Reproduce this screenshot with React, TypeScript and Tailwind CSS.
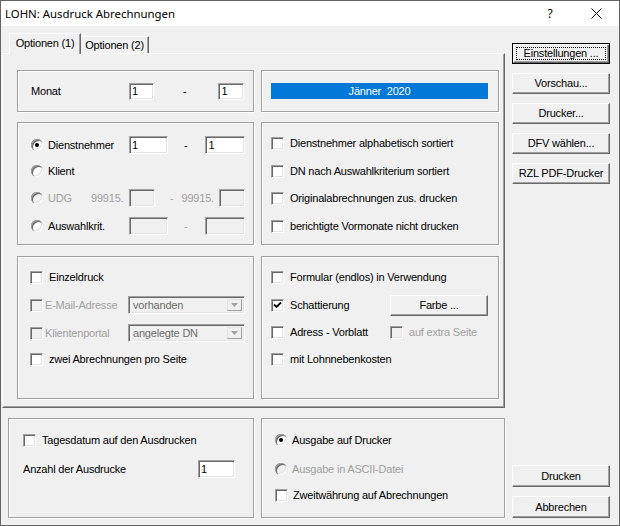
import React from 'react'

type Kid = { children?: React.ReactNode; className?: string }

function Check({ checked = false, disabled = false }: { checked?: boolean; disabled?: boolean }) {
  return (
    <span
      className={`flex items-center justify-center w-[13px] h-[13px] shrink-0 border border-t-[#a0a0a0] border-l-[#a0a0a0] border-r-white border-b-white shadow-[inset_1px_1px_0_#696969,inset_-1px_-1px_0_#e3e3e3] ${
        disabled ? 'bg-[#f0f0f0]' : 'bg-white'
      }`}
    >
      {checked && (
        <svg width="9" height="9" viewBox="0 0 9 9">
          <path d="M1 3.5 L3.5 6 L8 1.5" stroke="#000" strokeWidth="1.8" fill="none" />
        </svg>
      )}
    </span>
  )
}

function Radio({ on = false, disabled = false }: { on?: boolean; disabled?: boolean }) {
  return (
    <span
      className={`flex items-center justify-center w-[12px] h-[12px] rounded-full shrink-0 shadow-[inset_1px_1px_0_#a0a0a0,inset_2px_2px_0_#696969,inset_-1px_-1px_0_#fff,inset_-2px_-2px_0_#e3e3e3] ${
        disabled ? 'bg-[#f0f0f0]' : 'bg-white'
      }`}
    >
      {on && <span className="w-[4px] h-[4px] rounded-full bg-black" />}
    </span>
  )
}

function Field({ value = '', disabled = false, className = '' }: { value?: string; disabled?: boolean; className?: string }) {
  return (
    <div
      className={`flex items-center pl-[2px] shrink-0 border border-t-[#a0a0a0] border-l-[#a0a0a0] border-r-white border-b-white shadow-[inset_1px_1px_0_#696969,inset_-1px_-1px_0_#e3e3e3] ${
        disabled ? 'bg-[#f0f0f0]' : 'bg-white'
      } ${className}`}
    >
      {value}
    </div>
  )
}

function Combo({ value }: { value: string }) {
  return (
    <div className="flex w-[117px] h-[18px] shrink-0 border border-t-[#a0a0a0] border-l-[#a0a0a0] border-r-white border-b-white shadow-[inset_1px_1px_0_#696969,inset_-1px_-1px_0_#e3e3e3] bg-[#f0f0f0] p-[2px]">
      <span className="flex-1 pl-[2px] text-[#6d6d6d] leading-[13px]">{value}</span>
      <span className="flex items-center justify-center w-[15px] h-full border border-t-[#e3e3e3] border-l-[#e3e3e3] border-r-[#a0a0a0] border-b-[#a0a0a0]">
        <svg width="7" height="4" viewBox="0 0 7 4">
          <path d="M0 0 H7 L3.5 4 Z" fill="#a0a0a0" />
        </svg>
      </span>
    </div>
  )
}

function Btn({ children, className = '' }: Kid) {
  return (
    <div
      className={`flex items-center justify-center bg-[#f0f0f0] border border-t-white border-l-white border-r-[#696969] border-b-[#696969] shadow-[inset_-1px_-1px_0_#a0a0a0] ${className}`}
    >
      {children}
    </div>
  )
}

function Group({ children, className = '' }: Kid) {
  return (
    <div className={`border border-[#a0a0a0] shadow-[inset_1px_1px_0_#fff,1px_1px_0_#fff] ${className}`}>{children}</div>
  )
}

export default function App() {
  return (
    <div className="w-[620px] h-[526px] border border-[#646464] bg-[#f0f0f0] flex flex-col overflow-hidden text-[11px] leading-[13px] tracking-[-0.2px] text-black font-['Liberation_Sans',Arial,sans-serif]">
      {/* title bar */}
      <div className="h-[25px] bg-white flex items-center pl-[4px] shrink-0">
        <span className="text-[11.4px] tracking-normal font-['Noto_Sans',sans-serif]">LOHN: Ausdruck Abrechnungen</span>
        <div className="ml-auto flex h-full">
          <div className="w-[46px] flex items-center justify-center text-[12px] font-['Noto_Sans',sans-serif] tracking-normal">?</div>
          <div className="w-[46px] flex items-center justify-center">
            <svg width="11" height="11" viewBox="0 0 11 11">
              <path d="M0.5 0.5 L10.5 10.5 M10.5 0.5 L0.5 10.5" stroke="#000" strokeWidth="1" />
            </svg>
          </div>
        </div>
      </div>

      <div className="flex-1 flex">
        {/* left column */}
        <div className="ml-[1px] w-[503px] flex flex-col pt-[7px]">
          <div className="flex items-end h-[20px]">
            <div className="relative z-10 ml-[7px] mb-[-1px] w-[72px] h-[21px] bg-[#f0f0f0] border-t border-l border-r border-t-white border-l-white border-r-[#696969] shadow-[inset_-1px_0_0_#a0a0a0] flex items-start justify-center pt-[3px]">
              Optionen (1)
            </div>
            <div className="w-[68px] h-[17px] border-t border-r border-t-white border-r-[#696969] shadow-[inset_-1px_0_0_#a0a0a0] flex items-start justify-center pt-[2px]">
              Optionen (2)
            </div>
          </div>

          <div className="h-[355px] border border-t-white border-l-white border-r-[#696969] border-b-[#696969] shadow-[inset_-1px_-1px_0_#a0a0a0] pt-[16px] pl-[14px] flex flex-col">
            {/* row 1 */}
            <div className="flex gap-[7px]">
              <Group className="w-[237px] h-[42px] flex items-center pl-[13px]">
                <span className="w-[98px]">Monat</span>
                <Field value="1" className="w-[25px] h-[17px]" />
                <span className="ml-[29px]">-</span>
                <Field value="1" className="ml-[32px] w-[26px] h-[17px]" />
              </Group>
              <Group className="w-[238px] h-[42px] flex items-center pl-[9px]">
                <div className="w-[217px] h-[16px] bg-[#0078d7] text-white flex items-center justify-center whitespace-pre">
                  Jänner  2020
                </div>
              </Group>
            </div>

            {/* row 2 */}
            <div className="flex gap-[7px] mt-[10px]">
              <Group className="w-[237px] h-[123px] flex flex-col pl-[13px]">
                <div className="flex items-center h-[18px] mt-[13px]">
                  <div className="w-[98px] flex items-center gap-[5px]">
                    <Radio on />
                    <span>Dienstnehmer</span>
                  </div>
                  <Field value="1" className="w-[39px] h-[18px]" />
                  <span className="ml-[16px]">-</span>
                  <Field value="1" className="ml-[18px] w-[40px] h-[18px]" />
                </div>
                <div className="flex items-center h-[18px] mt-[8px] gap-[5px]">
                  <Radio />
                  <span>Klient</span>
                </div>
                <div className="flex items-center h-[18px] mt-[9px] text-[#a0a0a0]">
                  <div className="w-[60px] flex items-center gap-[5px]">
                    <Radio disabled />
                    <span>UDG</span>
                  </div>
                  <span className="w-[38px]">99915.</span>
                  <Field disabled className="w-[26px] h-[18px]" />
                  <span className="ml-[15px]">-</span>
                  <span className="ml-[8px] w-[38px]">99915.</span>
                  <Field disabled className="w-[26px] h-[18px]" />
                </div>
                <div className="flex items-center h-[18px] mt-[10px]">
                  <div className="w-[98px] flex items-center gap-[5px]">
                    <Radio />
                    <span>Auswahlkrit.</span>
                  </div>
                  <Field disabled className="w-[39px] h-[18px]" />
                  <span className="ml-[16px] text-[#a0a0a0]">-</span>
                  <Field disabled className="ml-[18px] w-[40px] h-[18px]" />
                </div>
              </Group>
              <Group className="w-[238px] h-[123px] flex flex-col pl-[9px]">
                <div className="flex items-center gap-[6px] h-[18px] mt-[11px]">
                  <Check />
                  <span>Dienstnehmer alphabetisch sortiert</span>
                </div>
                <div className="flex items-center gap-[6px] h-[18px] mt-[10px]">
                  <Check />
                  <span>DN nach Auswahlkriterium sortiert</span>
                </div>
                <div className="flex items-center gap-[6px] h-[18px] mt-[9px]">
                  <Check />
                  <span>Originalabrechnungen zus. drucken</span>
                </div>
                <div className="flex items-center gap-[6px] h-[18px] mt-[10px]">
                  <Check />
                  <span>berichtigte Vormonate nicht drucken</span>
                </div>
              </Group>
            </div>

            {/* row 3 */}
            <div className="flex gap-[7px] mt-[11px]">
              <Group className="w-[237px] h-[143px] flex flex-col pl-[12px]">
                <div className="flex items-center gap-[6px] h-[18px] mt-[11px]">
                  <Check />
                  <span>Einzeldruck</span>
                </div>
                <div className="flex items-center h-[18px] mt-[10px]">
                  <div className="w-[98px] flex items-center gap-[2px] text-[#a0a0a0]">
                    <Check disabled />
                    <span>E-Mail-Adresse</span>
                  </div>
                  <Combo value="vorhanden" />
                </div>
                <div className="flex items-center h-[18px] mt-[10px]">
                  <div className="w-[98px] flex items-center gap-[2px] text-[#a0a0a0]">
                    <Check disabled />
                    <span>Klientenportal</span>
                  </div>
                  <Combo value="angelegte DN" />
                </div>
                <div className="flex items-center gap-[6px] h-[18px] mt-[8px]">
                  <Check />
                  <span>zwei Abrechnungen pro Seite</span>
                </div>
              </Group>
              <Group className="w-[238px] h-[143px] flex flex-col pl-[9px]">
                <div className="flex items-center gap-[6px] h-[18px] mt-[11px]">
                  <Check />
                  <span>Formular (endlos) in Verwendung</span>
                </div>
                <div className="flex items-center h-[18px] mt-[10px]">
                  <div className="w-[119px] flex items-center gap-[6px]">
                    <Check checked />
                    <span>Schattierung</span>
                  </div>
                  <Btn className="w-[98px] h-[21px]">Farbe ...</Btn>
                </div>
                <div className="flex items-center h-[18px] mt-[9px]">
                  <div className="w-[119px] flex items-center gap-[6px]">
                    <Check />
                    <span>Adress - Vorblatt</span>
                  </div>
                  <div className="flex items-center gap-[6px] text-[#a0a0a0]">
                    <Check disabled />
                    <span>auf extra Seite</span>
                  </div>
                </div>
                <div className="flex items-center gap-[6px] h-[18px] mt-[9px]">
                  <Check />
                  <span>mit Lohnnebenkosten</span>
                </div>
              </Group>
            </div>
          </div>

          {/* bottom groups */}
          <div className="flex gap-[7px] mt-[10px] ml-[6px]">
            <Group className="w-[246px] h-[100px] flex flex-col pl-[14px]">
              <div className="flex items-center gap-[6px] h-[18px] mt-[12px]">
                <Check />
                <span>Tagesdatum auf den Ausdrucken</span>
              </div>
              <div className="flex items-center h-[18px] mt-[11px]">
                <span className="w-[175px]">Anzahl der Ausdrucke</span>
                <Field value="1" className="w-[37px] h-[18px]" />
              </div>
            </Group>
            <Group className="w-[244px] h-[100px] flex flex-col pl-[13px]">
              <div className="flex items-center gap-[5px] h-[18px] mt-[12px]">
                <Radio on />
                <span>Ausgabe auf Drucker</span>
              </div>
              <div className="flex items-center gap-[5px] h-[18px] mt-[11px] text-[#a0a0a0]">
                <Radio disabled />
                <span>Ausgabe in ASCII-Datei</span>
              </div>
              <div className="flex items-center gap-[5px] h-[18px] mt-[8px]">
                <Check />
                <span>Zweitwährung auf Abrechnungen</span>
              </div>
            </Group>
          </div>
        </div>

        {/* right column */}
        <div className="ml-[7px] w-[98px] flex flex-col pt-[17px] pb-[7px]">
          <div className="h-[21px] border border-black">
            <Btn className="h-full p-[2px]">
              <span className="flex-1 h-full border border-dotted border-black flex items-center justify-center">
                Einstellungen ...
              </span>
            </Btn>
          </div>
          <Btn className="h-[21px] mt-[9px]">Vorschau...</Btn>
          <Btn className="h-[21px] mt-[9px]">Drucker...</Btn>
          <Btn className="h-[21px] mt-[9px]">DFV wählen...</Btn>
          <Btn className="h-[21px] mt-[9px]">RZL PDF-Drucker</Btn>
          <Btn className="h-[22px] mt-auto">Drucken</Btn>
          <Btn className="h-[22px] mt-[9px]">Abbrechen</Btn>
        </div>
      </div>
    </div>
  )
}
